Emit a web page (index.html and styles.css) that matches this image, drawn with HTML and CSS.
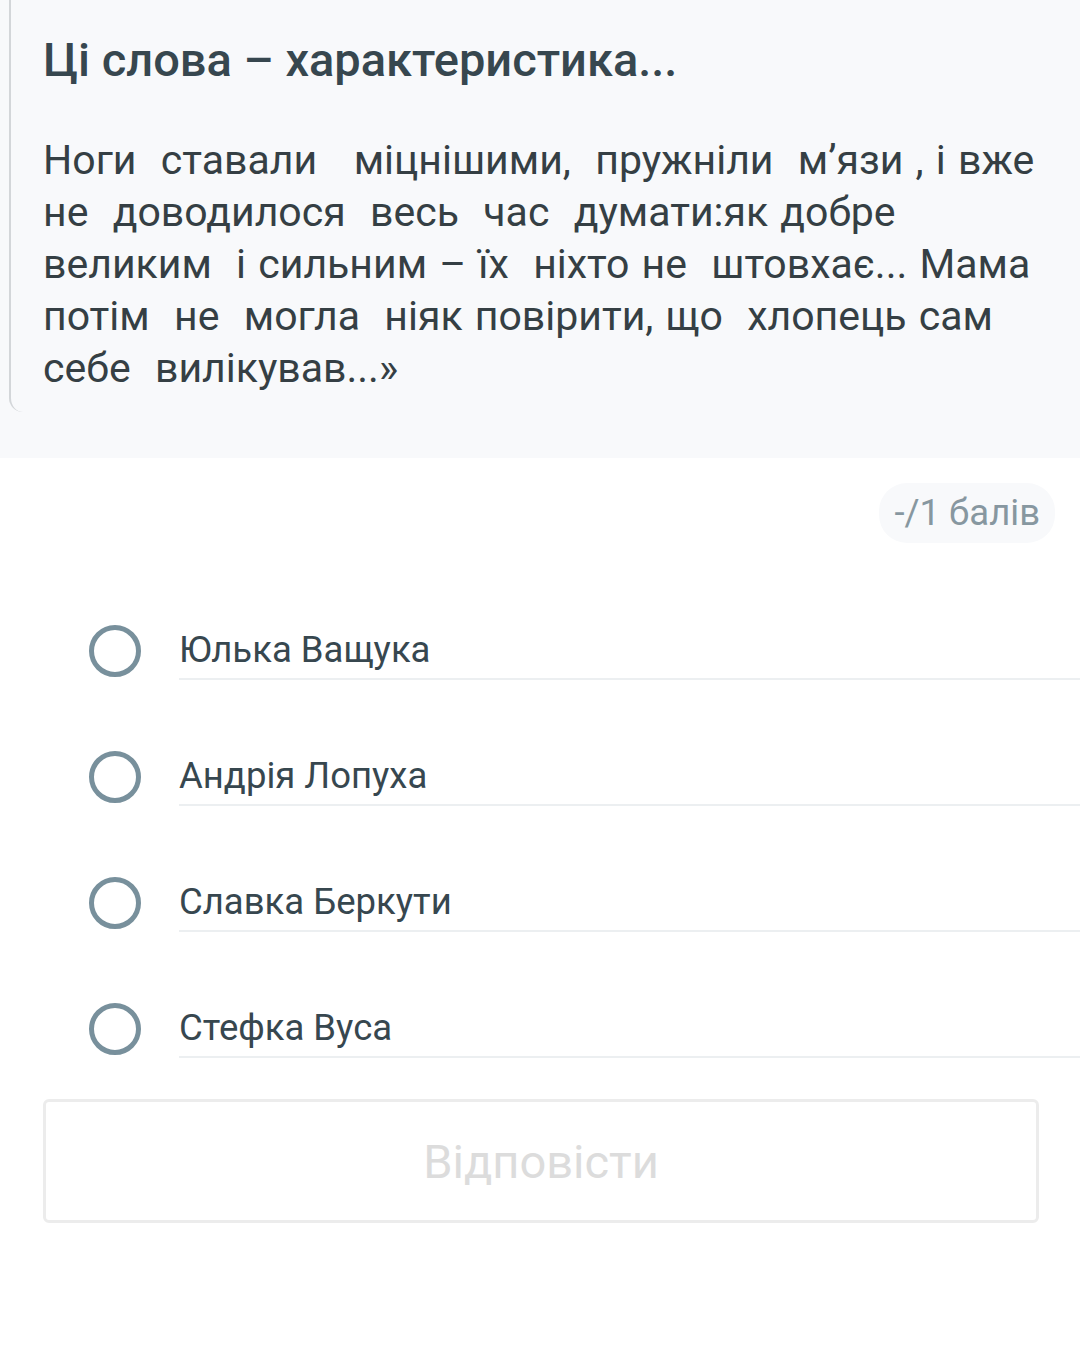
FILE: index.html
```html
<!DOCTYPE html>
<html lang="uk">
<head>
    <meta charset="UTF-8">
    <title>Тест</title>
    <link rel="stylesheet" href="styles.css">
</head>
<body>
<div class="questionBox">
    <div class="questionCard">
        <h2 class="questionTitle">Ці слова – характеристика...</h2>
        <p class="questionText">Ноги  ставали   міцнішими,  пружніли  м’язи , і вже<br>не  доводилося  весь  час  думати:як добре<br>великим  і сильним – їх  ніхто не  штовхає... Мама<br>потім  не  могла  ніяк повірити, що  хлопець сам<br>себе  вилікував...»</p>
    </div>
</div>
<div class="scoreRow">
    <span class="score">-/1 балів</span>
</div>
<ul class="options">
    <li class="option"><span class="radio"></span><span class="label">Юлька Ващука</span></li>
    <li class="option"><span class="radio"></span><span class="label">Андрія Лопуха</span></li>
    <li class="option"><span class="radio"></span><span class="label">Славка Беркути</span></li>
    <li class="option"><span class="radio"></span><span class="label">Стефка Вуса</span></li>
</ul>
<div class="answer">
    <button class="answerBtn" disabled>Відповісти</button>
</div>
</body>
</html>
```

FILE: styles.css
```css
*{ padding: 0; margin: 0; box-sizing: border-box;}
body{ width: 1080px; height: 1366px; background: #fff; font-family: Roboto, "Noto Sans", sans-serif; color: #37474f; overflow: hidden;}

.questionBox{ background: #f8f9fb; height: 458px; padding-left: 9px;}
.questionCard{ height: 412px; border-left: 2px solid #d3d6d9; border-bottom-left-radius: 14px; padding: 32px 0 0 32px;}
.questionTitle{ font-size: 47px; font-weight: 500; line-height: 56px; color: #37474f;}
.questionText{ margin-top: 46px; font-size: 41px; line-height: 52px; white-space: pre; word-spacing: 2px; color: #353f44;}

.scoreRow{ display: flex; justify-content: flex-end; padding: 25px 25px 0 0;}
.score{ background: #f8f9fb; border-radius: 28px; height: 60px; line-height: 60px; padding: 0 15px; font-size: 36.5px; color: #8797a0;}

.options{ list-style: none; margin-top: 45px;}
.option{ display: flex; align-items: center; height: 126px;}
.radio{ width: 52px; height: 52px; border: 5px solid #78909c; border-radius: 50%; margin-left: 89px; margin-right: 38px; flex: none;}
.label{ flex: 1; font-size: 36.5px; height: 58px; line-height: 56px; border-bottom: 2px solid #eceff1;}

.answer{ padding: 0 41px 0 43px; margin-top: 7px;}
.answerBtn{ width: 100%; height: 124px; background: #fff; border: 3px solid #ececec; border-radius: 6px; font-family: Roboto, "Noto Sans", sans-serif; font-size: 47px; color: #dcdcdc;}
```
